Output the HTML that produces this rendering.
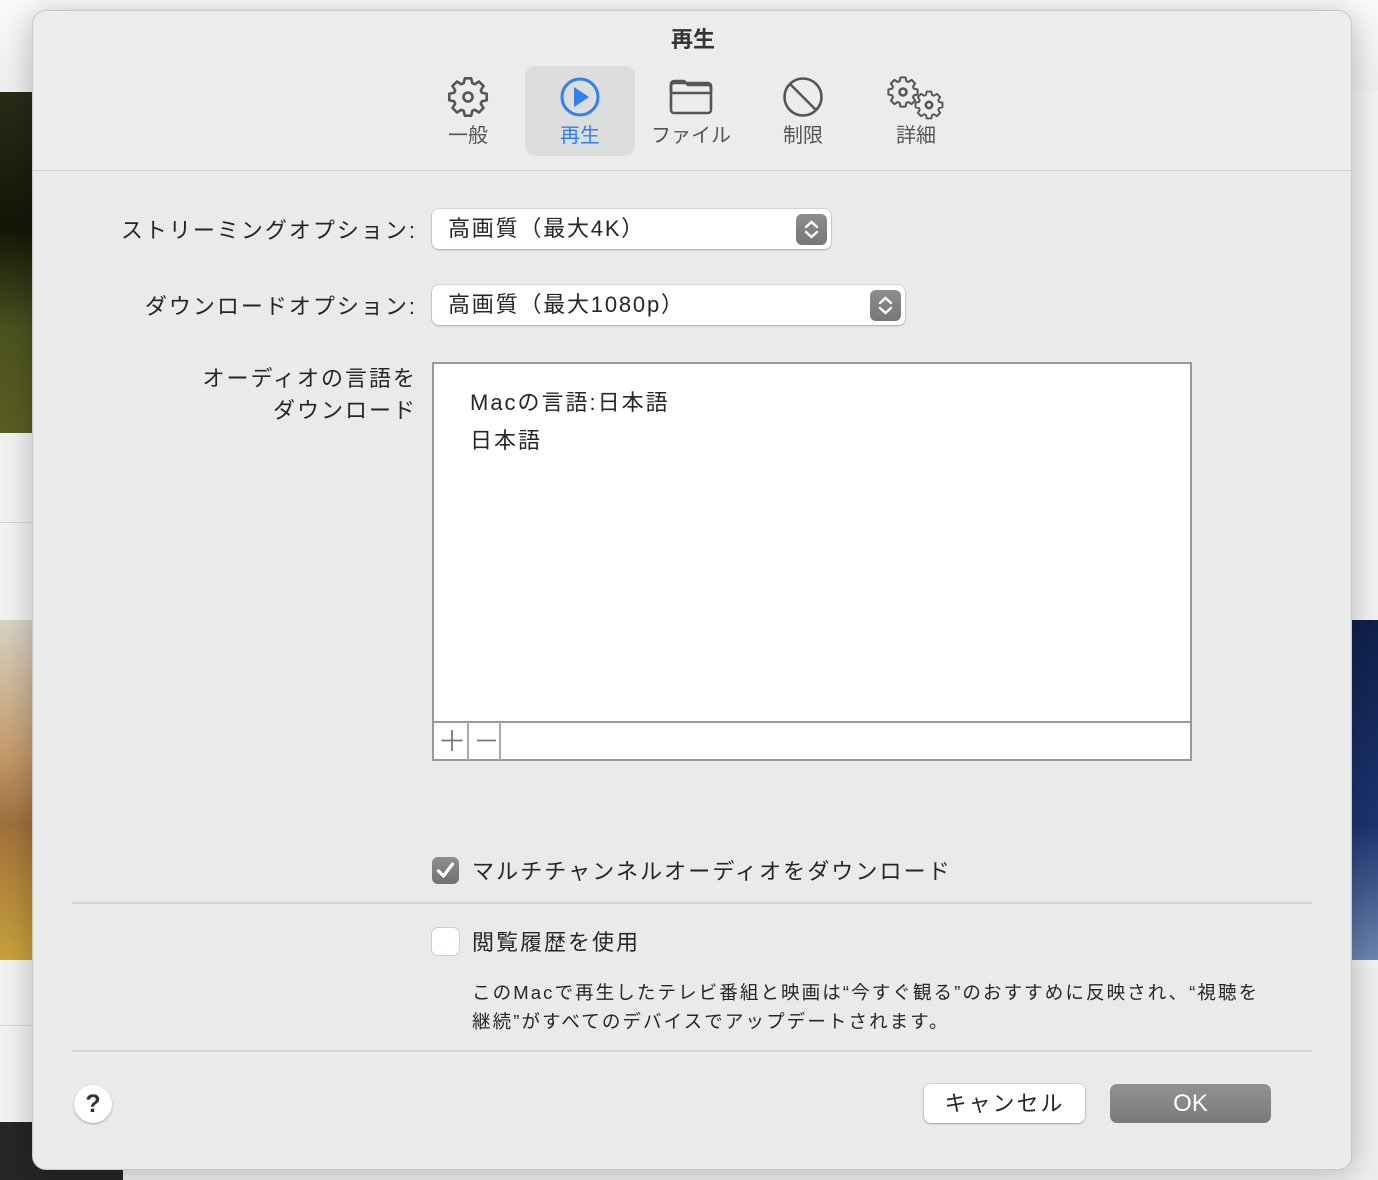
<!DOCTYPE html>
<html><head><meta charset="utf-8">
<style>
*{margin:0;padding:0;box-sizing:border-box}
body{width:1378px;height:1180px;overflow:hidden;position:relative;background:#f2f2f2;font-family:"Liberation Sans","Noto Sans CJK JP",sans-serif;color:#262626}
.a{position:absolute}
.win{left:32px;top:10px;width:1320px;height:1160px;background:#e9eaea;border-radius:14px;border:1px solid #c8c8c8;box-shadow:0 4px 30px rgba(0,0,0,.25);overflow:hidden}
.lbl{font-size:22px;text-align:right;white-space:nowrap;letter-spacing:2px}
.pop{background:#fff;border-radius:7px;box-shadow:0 0 0 1px rgba(0,0,0,.08),0 1px 2px rgba(0,0,0,.2);font-size:22px;padding-left:16px;line-height:40px;height:40px;letter-spacing:1.8px}
.stp{position:absolute;right:4px;top:5px;width:31px;height:31px;border-radius:6px;background:linear-gradient(#8d8d8d,#777)}
.tab{font-size:20px;color:#555;text-align:center;width:110px}
</style></head><body>
<div class="a" style="left:0;top:0;width:1378px;height:90px;background:linear-gradient(#fafafa,#eeeeee)"></div>
<div class="a" style="left:0;top:92px;width:40px;height:341px;background:linear-gradient(#2a2c18,#151508 40%,#4d5320 70%,#5a5e22)"></div>
<div class="a" style="left:0;top:522px;width:40px;height:1px;background:#d5d5d5"></div>
<div class="a" style="left:0;top:620px;width:40px;height:340px;background:linear-gradient(#d9d2c6,#c49a6a 40%,#a0703e 60%,#c9a23a)"></div>
<div class="a" style="left:0;top:1025px;width:40px;height:1px;background:#d5d5d5"></div>
<div class="a" style="left:0;top:1122px;width:123px;height:58px;background:#262626"></div>
<div class="a" style="left:1340px;top:620px;width:38px;height:340px;background:linear-gradient(#10204a,#1b3470 60%,#6a86b0)"></div>
<div class="a" style="left:1340px;top:968px;width:38px;height:212px;background:#eeeeee"></div>

<div class="a win">
 <div class="a" style="left:0;top:0;width:1320px;height:160px;background:#ececec;border-bottom:1px solid #cfcfcf"></div>
 <div class="a" style="left:0;top:11px;width:1320px;text-align:center;font-size:22px;font-weight:bold;color:#333">再生</div>
 <div class="a" style="left:492px;top:55px;width:110px;height:90px;background:#dcdddd;border-radius:10px"></div>
 <svg class="a" style="left:0;top:0" width="1320" height="160">
  <g fill="none" stroke="#555" stroke-width="2.6" stroke-linejoin="round">
   <path id="g1" transform="translate(435,86)"/>
   <circle cx="435" cy="86" r="4.5"/>
   <rect x="638" y="72" width="40" height="30" rx="3"/>
   <path d="M638 81 V73 a3 3 0 0 1 3-3 h10 l4 4 h20 a3 3 0 0 1 3 3 v4 M638 82 h40"/>
   <circle cx="770" cy="86" r="18.5"/>
   <path d="M757 73 L783 99"/>
   <path id="g2" transform="translate(870,81) scale(.78)"/>
   <circle cx="870" cy="81" r="3.5"/>
   <path id="g3" transform="translate(896,94) scale(.72)"/>
   <circle cx="896" cy="94" r="3.2"/>
  </g>
  <circle cx="547" cy="86" r="18" fill="none" stroke="#2f7ff5" stroke-width="3"/>
  <path d="M541 76 L556 86 L541 96 Z" fill="#2f7ff5"/>
 </svg>
 <div class="a tab" style="left:380px;top:108px">一般</div>
 <div class="a tab" style="left:492px;top:108px;color:#2f7ff5">再生</div>
 <div class="a tab" style="left:593px;top:108px;width:130px">ファイル</div>
 <div class="a tab" style="left:715px;top:108px">制限</div>
 <div class="a tab" style="left:828px;top:108px">詳細</div>

 <div class="a lbl" style="right:934px;top:202px">ストリーミングオプション:</div>
 <div class="a pop" style="left:399px;top:198px;width:399px">高画質（最大4K）<div class="stp"><svg width="31" height="31"><path d="M10 13 l5.5-5 5.5 5 M10 18 l5.5 5 5.5-5" fill="none" stroke="#fff" stroke-width="2.4" stroke-linecap="round"/></svg></div></div>
 <div class="a lbl" style="right:934px;top:278px">ダウンロードオプション:</div>
 <div class="a pop" style="left:399px;top:274px;width:473px">高画質（最大1080p）<div class="stp"><svg width="31" height="31"><path d="M10 13 l5.5-5 5.5 5 M10 18 l5.5 5 5.5-5" fill="none" stroke="#fff" stroke-width="2.4" stroke-linecap="round"/></svg></div></div>
 <div class="a lbl" style="right:934px;top:352px;line-height:32px">オーディオの言語を<br>ダウンロード</div>

 <div class="a" style="left:399px;top:351px;width:760px;height:399px;background:#fff;border:2px solid #999"></div>
 <div class="a" style="left:401px;top:710px;width:756px;height:2px;background:#999"></div>
 <div class="a" style="left:434px;top:711px;width:2px;height:38px;background:#aaa"></div>
 <div class="a" style="left:466px;top:711px;width:2px;height:38px;background:#aaa"></div>
 <svg class="a" style="left:401px;top:711px" width="66" height="38"><path d="M18 8 V29 M7.5 18.5 H28.5 M43 18.5 H62" stroke="#777" stroke-width="1.8" fill="none"/></svg>
 <div class="a" style="left:437px;top:373px;font-size:22px;line-height:38px;letter-spacing:2px">Macの言語:日本語<br>日本語</div>

 <div class="a" style="left:399px;top:846px;width:27px;height:27px;border-radius:6px;background:linear-gradient(#8e8e8e,#707070)"><svg width="27" height="27"><path d="M6.5 14 l5 5 9-12" fill="none" stroke="#fff" stroke-width="3.2" stroke-linecap="round" stroke-linejoin="round"/></svg></div>
 <div class="a" style="left:439px;top:843px;font-size:22px;white-space:nowrap;letter-spacing:2.1px">マルチチャンネルオーディオをダウンロード</div>
 <div class="a" style="left:39px;top:891px;width:1240px;height:2px;background:#d4d4d4"></div>
 <div class="a" style="left:399px;top:917px;width:27px;height:27px;border-radius:6px;background:#fff;box-shadow:0 0 0 1px rgba(0,0,0,.12)"></div>
 <div class="a" style="left:439px;top:914px;font-size:22px;white-space:nowrap;letter-spacing:2px">閲覧履歴を使用</div>
 <div class="a" style="left:439px;top:967px;width:860px;font-size:18.5px;line-height:29px;letter-spacing:2.1px;white-space:nowrap">このMacで再生したテレビ番組と映画は“今すぐ観る”のおすすめに反映され、“視聴を<br>継続”がすべてのデバイスでアップデートされます。</div>
 <div class="a" style="left:39px;top:1039px;width:1240px;height:2px;background:#d4d4d4"></div>

 <div class="a" style="left:41px;top:1074px;width:38px;height:38px;border-radius:50%;background:#fff;box-shadow:0 1px 2px rgba(0,0,0,.3);text-align:center;line-height:38px;font-size:25px;font-weight:bold;color:#333">?</div>
 <div class="a" style="left:891px;top:1073px;width:161px;height:39px;border-radius:7px;background:#fff;box-shadow:0 0 0 1px rgba(0,0,0,.08),0 1px 2px rgba(0,0,0,.25);text-align:center;line-height:39px;font-size:22px;letter-spacing:2px">キャンセル</div>
 <div class="a" style="left:1077px;top:1073px;width:161px;height:39px;border-radius:7px;background:linear-gradient(#929292,#7a7a7a);text-align:center;line-height:39px;font-size:24px;color:#fff">OK</div>
</div>
<script>
function gear(){var n=8,ro=19,ri=14.5,d="";for(var k=0;k<n;k++){var t=k*2*Math.PI/n;var a=[[t-0.30,ri],[t-0.17,ro],[t+0.17,ro],[t+0.30,ri]];for(var j=0;j<4;j++){var x=(a[j][1]*Math.cos(a[j][0])).toFixed(2),y=(a[j][1]*Math.sin(a[j][0])).toFixed(2);d+=(d?"L":"M")+x+" "+y;}}return d+"Z";}
var g=gear();["g1","g2","g3"].forEach(function(i){document.getElementById(i).setAttribute("d",g)});
</script>
</body></html>
